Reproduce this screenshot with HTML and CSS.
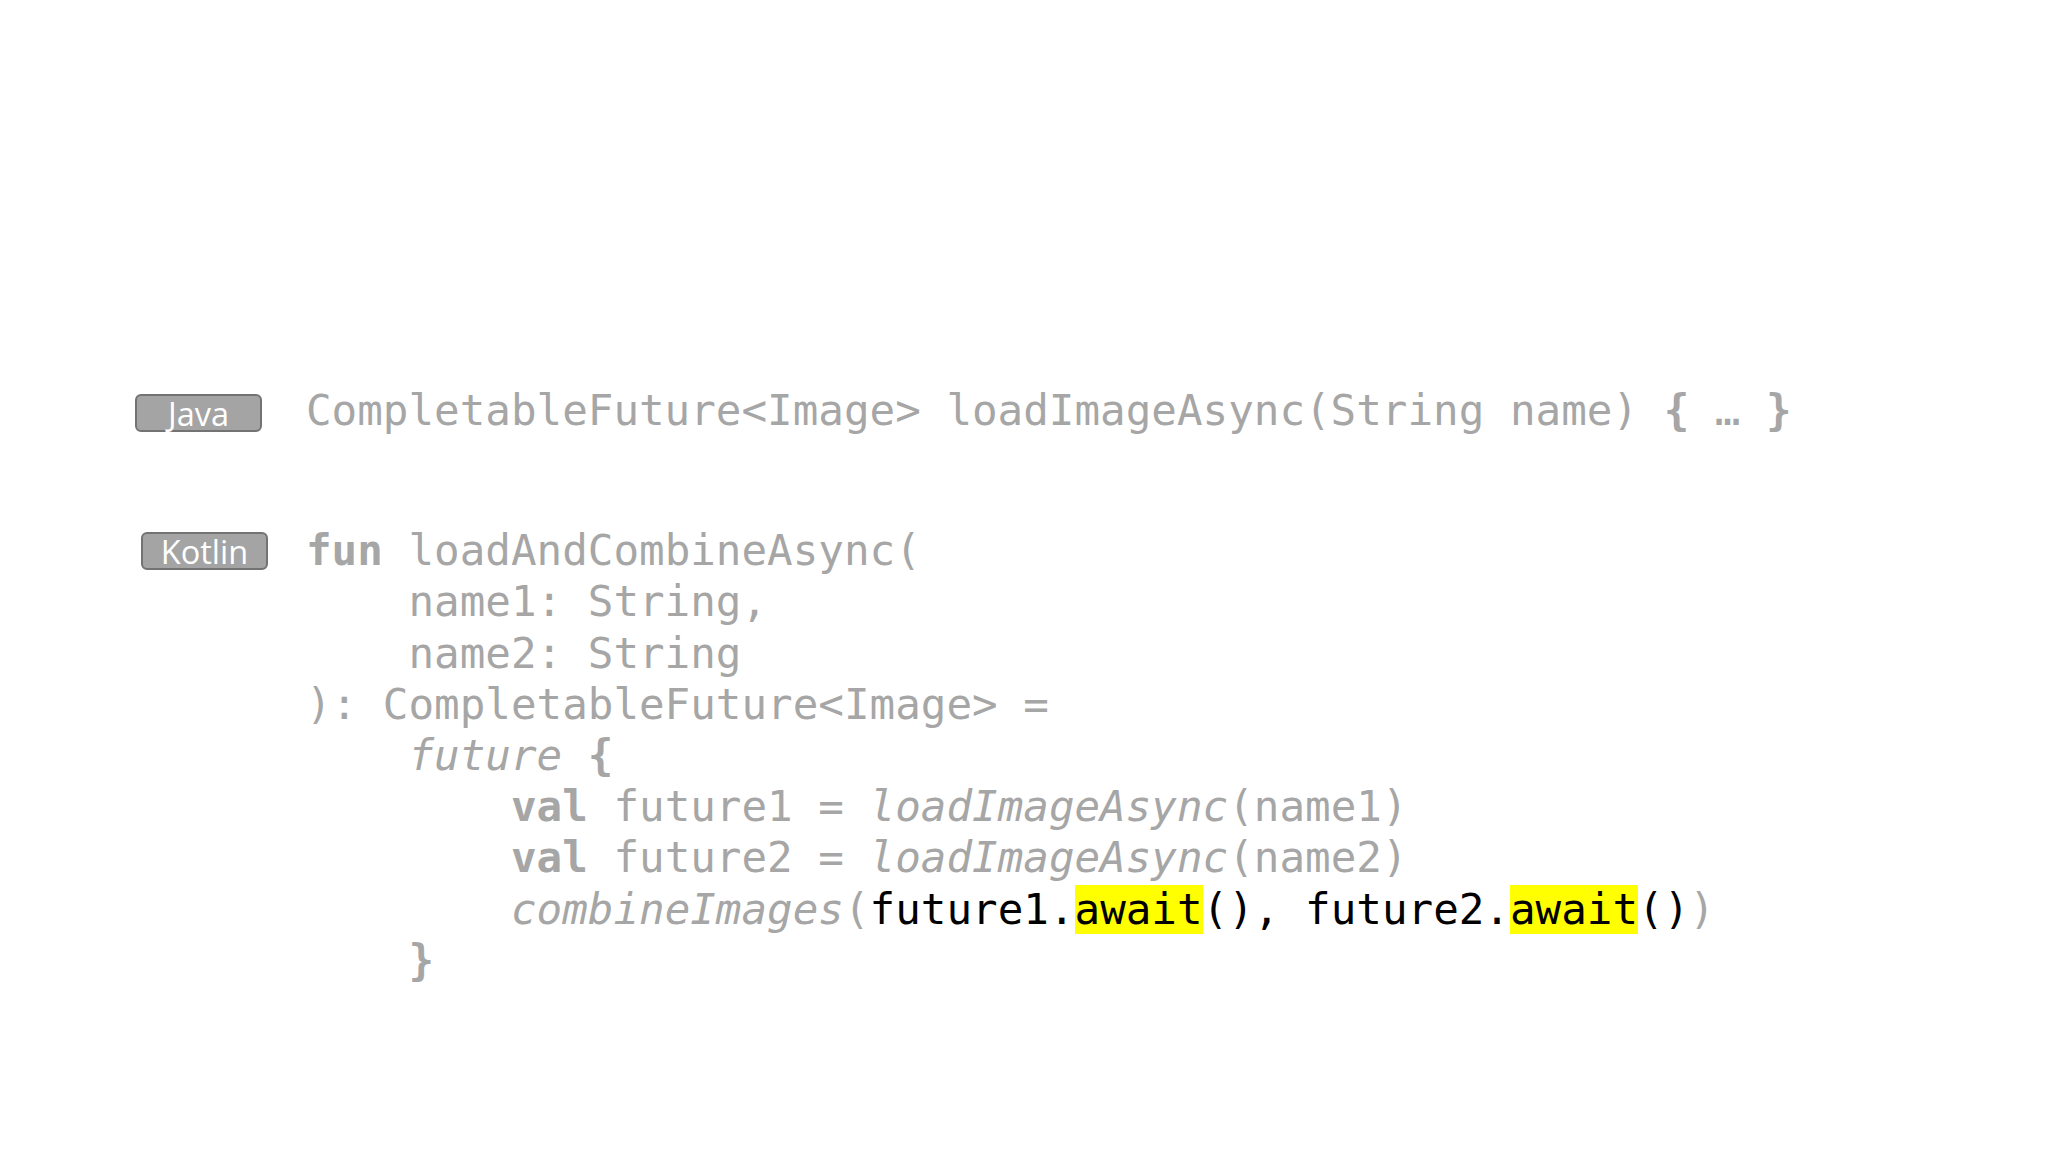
FILE: index.html
```html
<!DOCTYPE html>
<html>
<head>
<meta charset="utf-8">
<link rel="stylesheet" href="styles.css">
</head>
<body>
<main class="slide">
  <div class="label"><span class="badge">Java</span></div>
  <pre class="code">CompletableFuture&lt;Image&gt; loadImageAsync(String name) <b>{</b> … <b>}</b></pre>

  <div class="label label-kotlin"><span class="badge">Kotlin</span></div>
  <pre class="code"><b>fun</b> loadAndCombineAsync(
    name1: String,
    name2: String
): CompletableFuture&lt;Image&gt; =
    <i>future</i> <b>{</b>
        <b>val</b> future1 = <i>loadImageAsync</i>(name1)
        <b>val</b> future2 = <i>loadImageAsync</i>(name2)
        <i>combineImages</i>(<span class="hot">future1.<mark>await</mark>(), future2.<mark>await</mark>()</span>)
    <b>}</b></pre>
</main>
</body>
</html>
```
FILE: styles.css
```css
html, body {
  margin: 0;
  padding: 0;
  background: #ffffff;
}

.slide {
  display: grid;
  grid-template-columns: 171px auto;
  row-gap: 89px;
  padding: 385px 0 0 135px;
}

.label {
  display: flex;
  align-items: flex-start;
  padding-top: 9px;
}

.label-kotlin {
  padding-top: 7px;
  padding-left: 6px;
}

.badge {
  box-sizing: border-box;
  width: 127px;
  height: 38px;
  border: 2px solid #737373;
  border-radius: 6px;
  background: #a4a4a4;
  color: #ffffff;
  font-family: "Open Sans", "Liberation Sans", sans-serif;
  font-size: 32.5px;
  line-height: 36px;
  text-align: center;
}

.code {
  margin: 0;
  font-family: "DejaVu Sans Mono", "Liberation Mono", monospace;
  font-size: 42.55px;
  line-height: 51.2px;
  color: #a6a6a6;
  white-space: pre;
}

.code b {
  font-weight: bold;
}

.code i {
  font-style: oblique;
}

.hot {
  color: #000000;
}

.code mark {
  background: #ffff00;
  color: #000000;
}
```
